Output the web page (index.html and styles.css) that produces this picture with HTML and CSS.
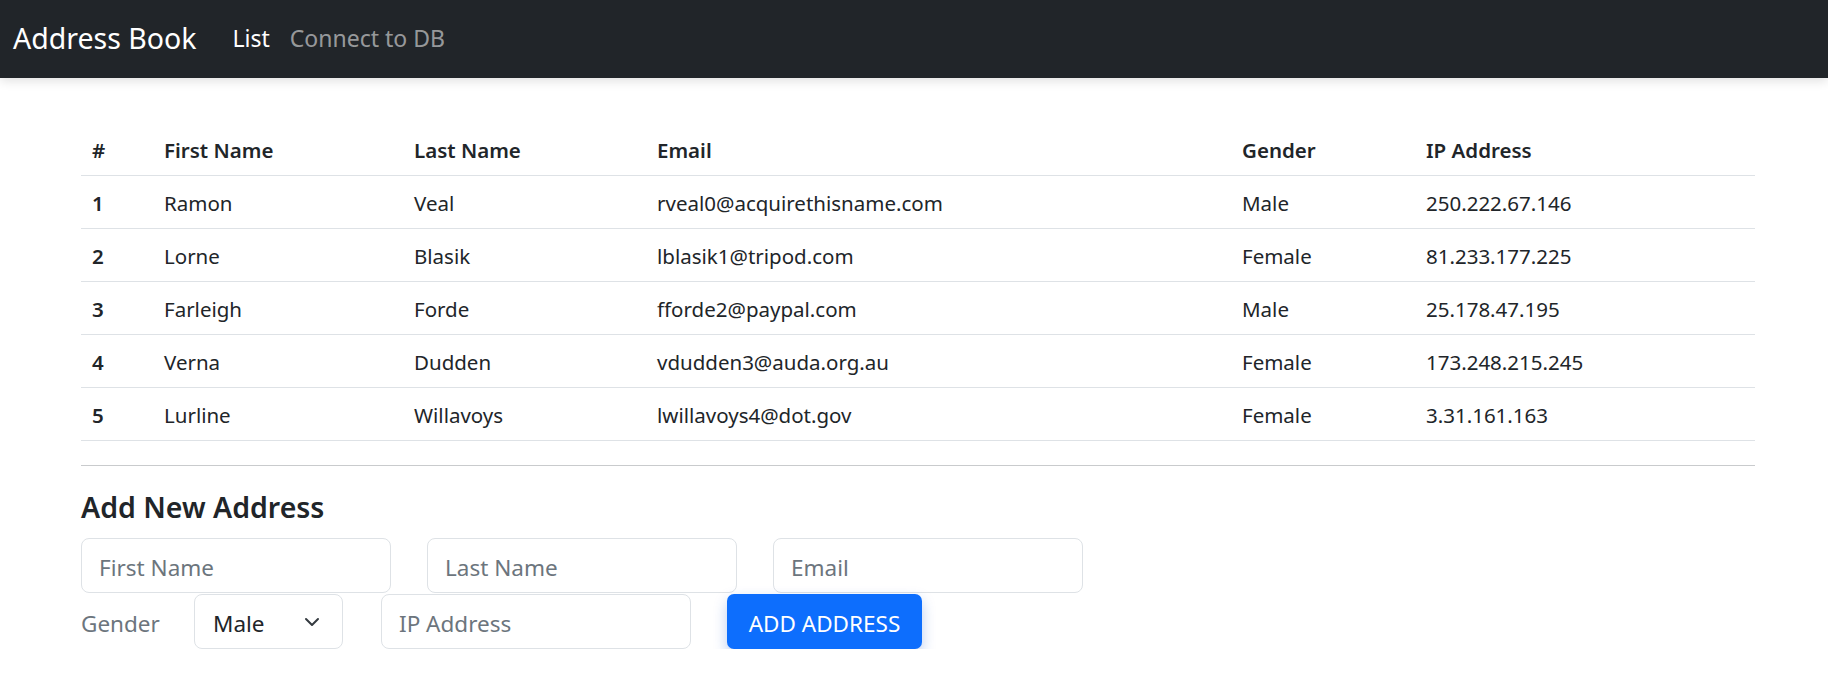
FILE: index.html
```html
<!DOCTYPE html>
<html lang="en">
<head>
<meta charset="utf-8">
<title>Address Book</title>
<link rel="stylesheet" href="styles.css">
</head>
<body>
<nav class="navbar">
  <a class="brand" href="#">Address Book</a>
  <a class="nav-link active" href="#">List</a>
  <a class="nav-link" href="#">Connect to DB</a>
</nav>
<main class="container">
  <table class="table">
    <colgroup>
      <col class="c-num"><col class="c-first"><col class="c-last"><col class="c-email"><col class="c-gender"><col class="c-ip">
    </colgroup>
    <thead>
      <tr><th>#</th><th>First Name</th><th>Last Name</th><th>Email</th><th>Gender</th><th>IP Address</th></tr>
    </thead>
    <tbody>
      <tr><th>1</th><td>Ramon</td><td>Veal</td><td>rveal0@acquirethisname.com</td><td>Male</td><td>250.222.67.146</td></tr>
      <tr><th>2</th><td>Lorne</td><td>Blasik</td><td>lblasik1@tripod.com</td><td>Female</td><td>81.233.177.225</td></tr>
      <tr><th>3</th><td>Farleigh</td><td>Forde</td><td>fforde2@paypal.com</td><td>Male</td><td>25.178.47.195</td></tr>
      <tr><th>4</th><td>Verna</td><td>Dudden</td><td>vdudden3@auda.org.au</td><td>Female</td><td>173.248.215.245</td></tr>
      <tr><th>5</th><td>Lurline</td><td>Willavoys</td><td>lwillavoys4@dot.gov</td><td>Female</td><td>3.31.161.163</td></tr>
    </tbody>
  </table>
  <hr class="divider">
  <h4 class="form-title">Add New Address</h4>
  <form class="address-form">
    <div class="form-row">
      <input class="field" type="text" placeholder="First Name">
      <input class="field" type="text" placeholder="Last Name">
      <input class="field" type="text" placeholder="Email">
    </div>
    <div class="form-row">
      <label class="label" for="gender">Gender</label>
      <select class="select" id="gender">
        <option>Male</option>
        <option>Female</option>
      </select>
      <input class="field" type="text" placeholder="IP Address">
      <button class="btn-primary" type="button">ADD ADDRESS</button>
    </div>
  </form>
</main>
</body>
</html>
```

FILE: styles.css
```css
* { box-sizing: border-box; }
html, body {
  margin: 0;
  padding: 0;
  background: #fff;
  color: #212529;
  font-family: "Noto Sans", "Open Sans", sans-serif;
}
a { text-decoration: none; }

.navbar {
  height: 78px;
  background: #212529;
  display: flex;
  align-items: center;
  padding: 0 0 3px 13px;
  box-shadow: 0 3px 10px rgba(0, 0, 0, 0.12);
  position: relative;
}
.brand {
  color: #fff;
  font-size: 28.5px;
  line-height: 40px;
}
.nav-link {
  color: rgba(255, 255, 255, 0.55);
  font-size: 23px;
  line-height: 32px;
  margin-left: 20px;
}
.nav-link.active {
  color: #fff;
  margin-left: 36px;
}

.container {
  width: 1674px;
  margin-left: 81px;
  padding-top: 45px;
}

.table {
  width: 100%;
  border-collapse: collapse;
  table-layout: fixed;
  font-size: 20.5px;
}
.c-num { width: 72px; }
.c-first { width: 250px; }
.c-last { width: 243px; }
.c-email { width: 585px; }
.c-gender { width: 184px; }
.c-ip { width: 340px; }
.table th, .table td {
  text-align: left;
  padding: 11px 11px 9px;
  line-height: 32px;
  border-bottom: 1px solid #dee2e6;
  white-space: nowrap;
}
.table th { font-weight: 600; }

.divider {
  border: 0;
  border-top: 1px solid #c9cbcd;
  margin: 24px 0 24px;
  height: 0;
}
.form-title {
  margin: 0 0 13px;
  font-size: 28.5px;
  font-weight: 600;
  line-height: 35px;
}

.address-form {
  display: flex;
  flex-direction: column;
  gap: 1px;
}
.form-row {
  display: flex;
  align-items: center;
}
.field, .select {
  height: 55px;
  border: 1px solid #dee2e6;
  border-radius: 8px;
  font-family: inherit;
  font-size: 22.5px;
  color: #212529;
  background-color: #fff;
  padding: 4px 17px 0;
}
.field { width: 310px; margin-right: 36px; }
.field::placeholder { color: #6c757d; opacity: 1; }
.label {
  color: #6c757d;
  font-size: 22.5px;
  width: 113px;
  padding-top: 4px;
}
.select {
  width: 149px;
  margin-right: 38px;
  padding-left: 18px;
  appearance: none;
  -webkit-appearance: none;
  background-image: url("data:image/svg+xml,%3csvg xmlns='http://www.w3.org/2000/svg' viewBox='0 0 16 16'%3e%3cpath fill='none' stroke='%23343a40' stroke-linecap='round' stroke-linejoin='round' stroke-width='2' d='M2 5l6 6 6-6'/%3e%3c/svg%3e");
  background-repeat: no-repeat;
  background-position: right 20px center;
  background-size: 20px 16px;
}
.btn-primary {
  height: 55px;
  width: 195px;
  border: 0;
  border-radius: 7px;
  background: #0d6efd;
  color: #fff;
  font-family: inherit;
  font-size: 22.5px;
  padding: 3px 10px 0;
  white-space: nowrap;
  box-shadow: 0 6px 14px rgba(13, 80, 200, 0.28);
}
```
